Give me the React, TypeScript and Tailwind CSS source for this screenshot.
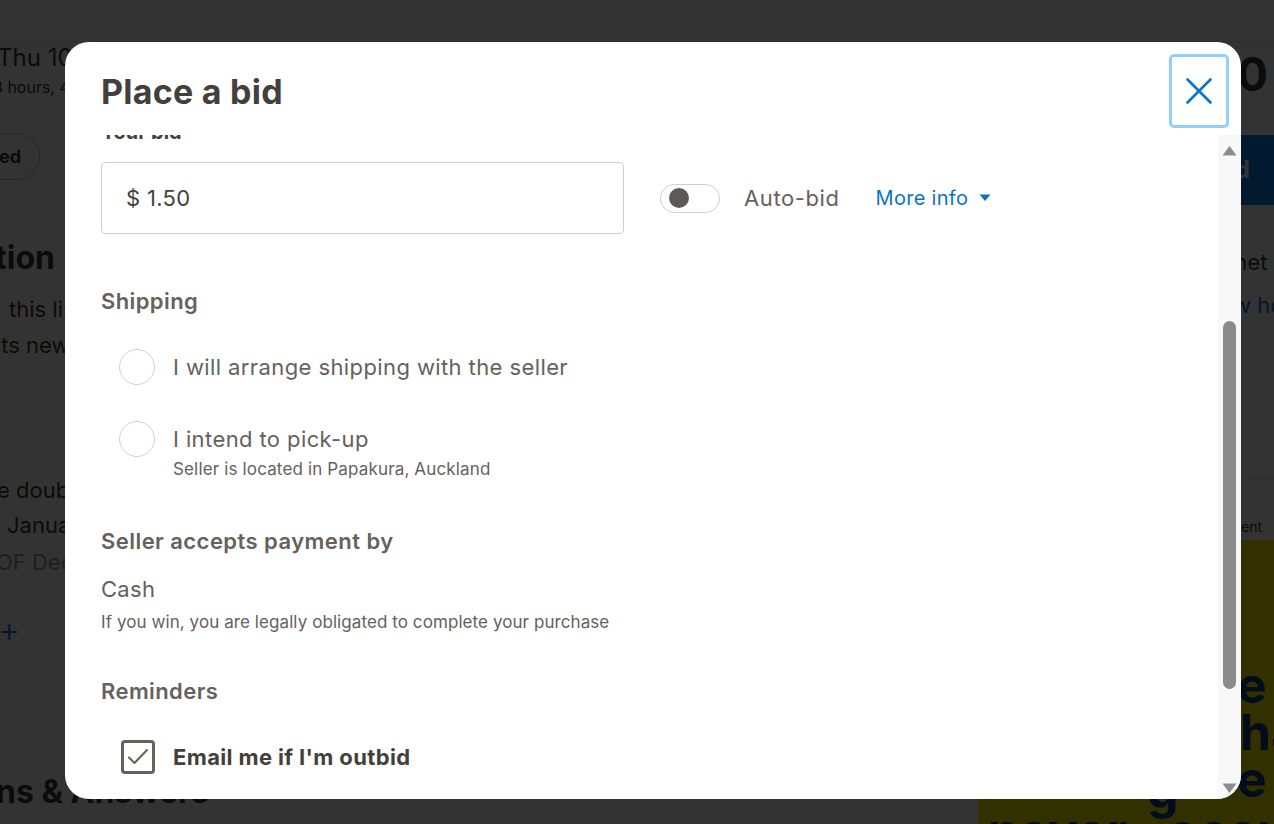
import React from "react";

const sans = "font-['Inter','Noto_Sans',sans-serif]";

const Radio = () => (
  <span className="w-[36px] h-[36px] shrink-0 rounded-full border border-[#d2d2d2] bg-white" />
);

const App = () => {
  return (
    <div className={`relative h-[824px] w-full overflow-hidden bg-white ${sans}`}>
      {/* page behind the dialog */}
      <div className="h-[42px] border-b border-[#e6e6e6] bg-white" />
      <div className="flex">
        <div className="w-[978px] shrink-0 flex flex-col text-[#3d3935]">
          <p className="-ml-[3px] mt-[1px] text-[24px] leading-[30px] whitespace-nowrap">Thu 10 Jan, 8:00 pm</p>
          <p className="-ml-[7px] mt-[2px] text-[16px] leading-[24px] whitespace-nowrap">3 hours, 41 mins</p>
          <div className="-ml-[90px] mt-[34px] w-[130px] h-[47px] rounded-full border border-[#bdbdbd] flex items-center justify-end pr-[18px] text-[18px] font-bold">
            Watchlisted
          </div>
          <p className="-ml-[245px] mt-[58px] w-[300px] text-right text-[32px] font-bold leading-[40px]">Description</p>
          <p className="ml-[9px] mt-[15px] text-[22px] leading-[32px] whitespace-nowrap">this listing is for a hand-made item</p>
          <p className="-ml-[4px] mt-[4px] text-[22px] leading-[32px] whitespace-nowrap">its new owner</p>
          <p className="-ml-[3px] mt-[113px] text-[22px] leading-[32px] whitespace-nowrap">e double sided</p>
          <p className="ml-[7px] mt-[3px] text-[22px] leading-[32px] whitespace-nowrap">January</p>
          <p className="-ml-[4px] mt-[5px] text-[22px] leading-[32px] text-[#9a9a9a] whitespace-nowrap">OF December</p>
          <p className="-ml-[2px] mt-[34px] text-[34px] leading-[36px] font-light text-[#0a74c8]">+</p>
          <p className="-ml-[4px] mt-[124px] text-[32px] font-bold leading-[40px] whitespace-nowrap">ns &amp; Answers</p>
        </div>
        <div className="w-[340px] shrink-0 flex flex-col text-[#3d3935]">
          <p className="mt-[6px] pr-[50px] text-right text-[46px] font-bold leading-[52px]">$1.00</p>
          <div className="mt-[35px] h-[70px] bg-[#0a80f0] flex items-center justify-end pr-[68px] text-[24px] font-bold text-white">
            Place bid
          </div>
          <p className="mt-[41px] pl-[209px] text-[22px] leading-[32px] whitespace-nowrap">Internet</p>
          <p className="mt-[11px] pl-[255px] text-[22px] leading-[32px] text-[#0a74c8] whitespace-nowrap">w how</p>
          <div className="mt-[157px] border-t border-[#dcdcdc]" />
          <p className="mt-[38px] pr-[56px] text-right text-[14px] leading-[20px]">Advertisement</p>
          <div className="mt-[3px] h-[300px] bg-[#fff000] text-[#0a3d8f] font-bold text-[50px] leading-[47px] pt-[122px]">
            <p className="pl-[259px] whitespace-nowrap">e</p>
            <p className="pl-[262px] whitespace-nowrap">ha</p>
            <p className="pl-[259px] whitespace-nowrap">e</p>
            <p className="pl-[169px] -mt-[36px] whitespace-nowrap">g</p>
            <p className="pl-[10px] -mt-[6px] whitespace-nowrap">never · occu</p>
          </div>
        </div>
      </div>

      {/* dim */}
      <div className="absolute inset-0 bg-black/80" />

      {/* dialog */}
      <div className="absolute left-[65px] top-[42px] w-[1176px] h-[757px] rounded-[24px] bg-white overflow-hidden flex flex-col">
        <div className="h-[93px] shrink-0 flex items-start justify-between pl-[36px] pr-[12px] pt-[12px]">
          <h2 className="mt-[18px] text-[34px] leading-[40px] font-bold tracking-[0.25px] text-[#433f3b]">Place a bid</h2>
          <button className="w-[60px] h-[74px] rounded-[5px] border-[3px] border-[#92cff9] flex items-center justify-center">
            <svg width="26" height="26" viewBox="0 0 26 26" fill="none" stroke="#0a74c8" strokeWidth="2.6" strokeLinecap="round">
              <path d="M1.5 1.5 L24.5 24.5 M24.5 1.5 L1.5 24.5" />
            </svg>
          </button>
        </div>

        <div className="flex-1 min-h-0 flex">
          <div className="flex-1 overflow-hidden pl-[36px]">
            <div className="-mt-[17px] flex flex-col text-[#66615d]">
              <p className="text-[20px] leading-[28px] font-bold text-[#433f3b]">Your bid</p>

              <div className="mt-[16px] flex items-center">
                <div className="w-[523px] h-[72px] rounded-[4px] border border-[#cfcfcf] flex items-center pl-[24px] text-[22px] tracking-[0.3px] text-[#433f3b]">
                  $ 1.50
                </div>
                <div className="ml-[36px] w-[60px] h-[29px] rounded-full border border-[#cfcfcf] flex items-center pl-[8px]">
                  <span className="w-[20px] h-[20px] rounded-full bg-[#5f5955]" />
                </div>
                <span className="ml-[24px] text-[22px] tracking-[0.6px]">Auto-bid</span>
                <span className="ml-[36px] flex items-center text-[20px] tracking-[0.3px] text-[#0a74c8]">
                  More info
                  <svg className="ml-[11px]" width="12" height="8" viewBox="0 0 12 8">
                    <path d="M0.5 0.5 H11.5 L6 7 Z" fill="#0a74c8" />
                  </svg>
                </span>
              </div>

              <p className="mt-[51px] text-[22px] leading-[32px] font-semibold tracking-[0.4px]">Shipping</p>

              <div className="mt-[32px] ml-[18px] flex items-center">
                <Radio />
                <span className="ml-[18px] text-[22px] leading-[36px] tracking-[0.4px]">I will arrange shipping with the seller</span>
              </div>

              <div className="mt-[36px] ml-[18px] flex items-start">
                <Radio />
                <div className="ml-[18px] flex flex-col">
                  <span className="text-[22px] leading-[36px] tracking-[0.4px]">I intend to pick-up</span>
                  <span className="text-[17px] leading-[24px] tracking-[0.15px]">Seller is located in Papakura, Auckland</span>
                </div>
              </div>

              <p className="mt-[44px] text-[22px] leading-[32px] font-semibold tracking-[0.45px]">Seller accepts payment by</p>
              <p className="mt-[16px] text-[22px] leading-[32px] tracking-[0.3px]">Cash</p>
              <p className="mt-[5px] text-[17px] leading-[24px] tracking-[0.08px]">If you win, you are legally obligated to complete your purchase</p>

              <p className="mt-[41px] text-[22px] leading-[32px] font-semibold tracking-[0.4px]">Reminders</p>

              <div className="mt-[33px] ml-[20px] flex items-center">
                <span className="w-[34px] h-[34px] shrink-0 rounded-[4px] border-[3px] border-[#66615d] flex items-center justify-center">
                  <svg width="22" height="18" viewBox="0 0 22 18" fill="none" stroke="#66615d" strokeWidth="2" strokeLinecap="round" strokeLinejoin="round">
                    <path d="M2 9.5 L7.5 15 L20 2" />
                  </svg>
                </span>
                <span className="ml-[18px] text-[22px] leading-[34px] font-bold tracking-[0.36px] text-[#433f3b]">Email me if I'm outbid</span>
              </div>
              <div className="h-[200px]" />
            </div>
          </div>

          {/* scrollbar */}
          <div className="w-[23px] shrink-0 bg-[#f8f8f8] flex flex-col items-center pt-[10px]">
            <svg width="15" height="11" viewBox="0 0 15 11">
              <path d="M7.5 1 L14.5 10.5 H0.5 Z" fill="#8c8c8c" />
            </svg>
            <div className="mt-[165px] w-[13px] h-[368px] rounded-[7px] bg-[#8b8b8b]" />
            <svg className="mt-[94px]" width="15" height="11" viewBox="0 0 15 11">
              <path d="M0.5 0.5 H14.5 L7.5 10 Z" fill="#8c8c8c" />
            </svg>
          </div>
        </div>
      </div>
    </div>
  );
};

export default App;
